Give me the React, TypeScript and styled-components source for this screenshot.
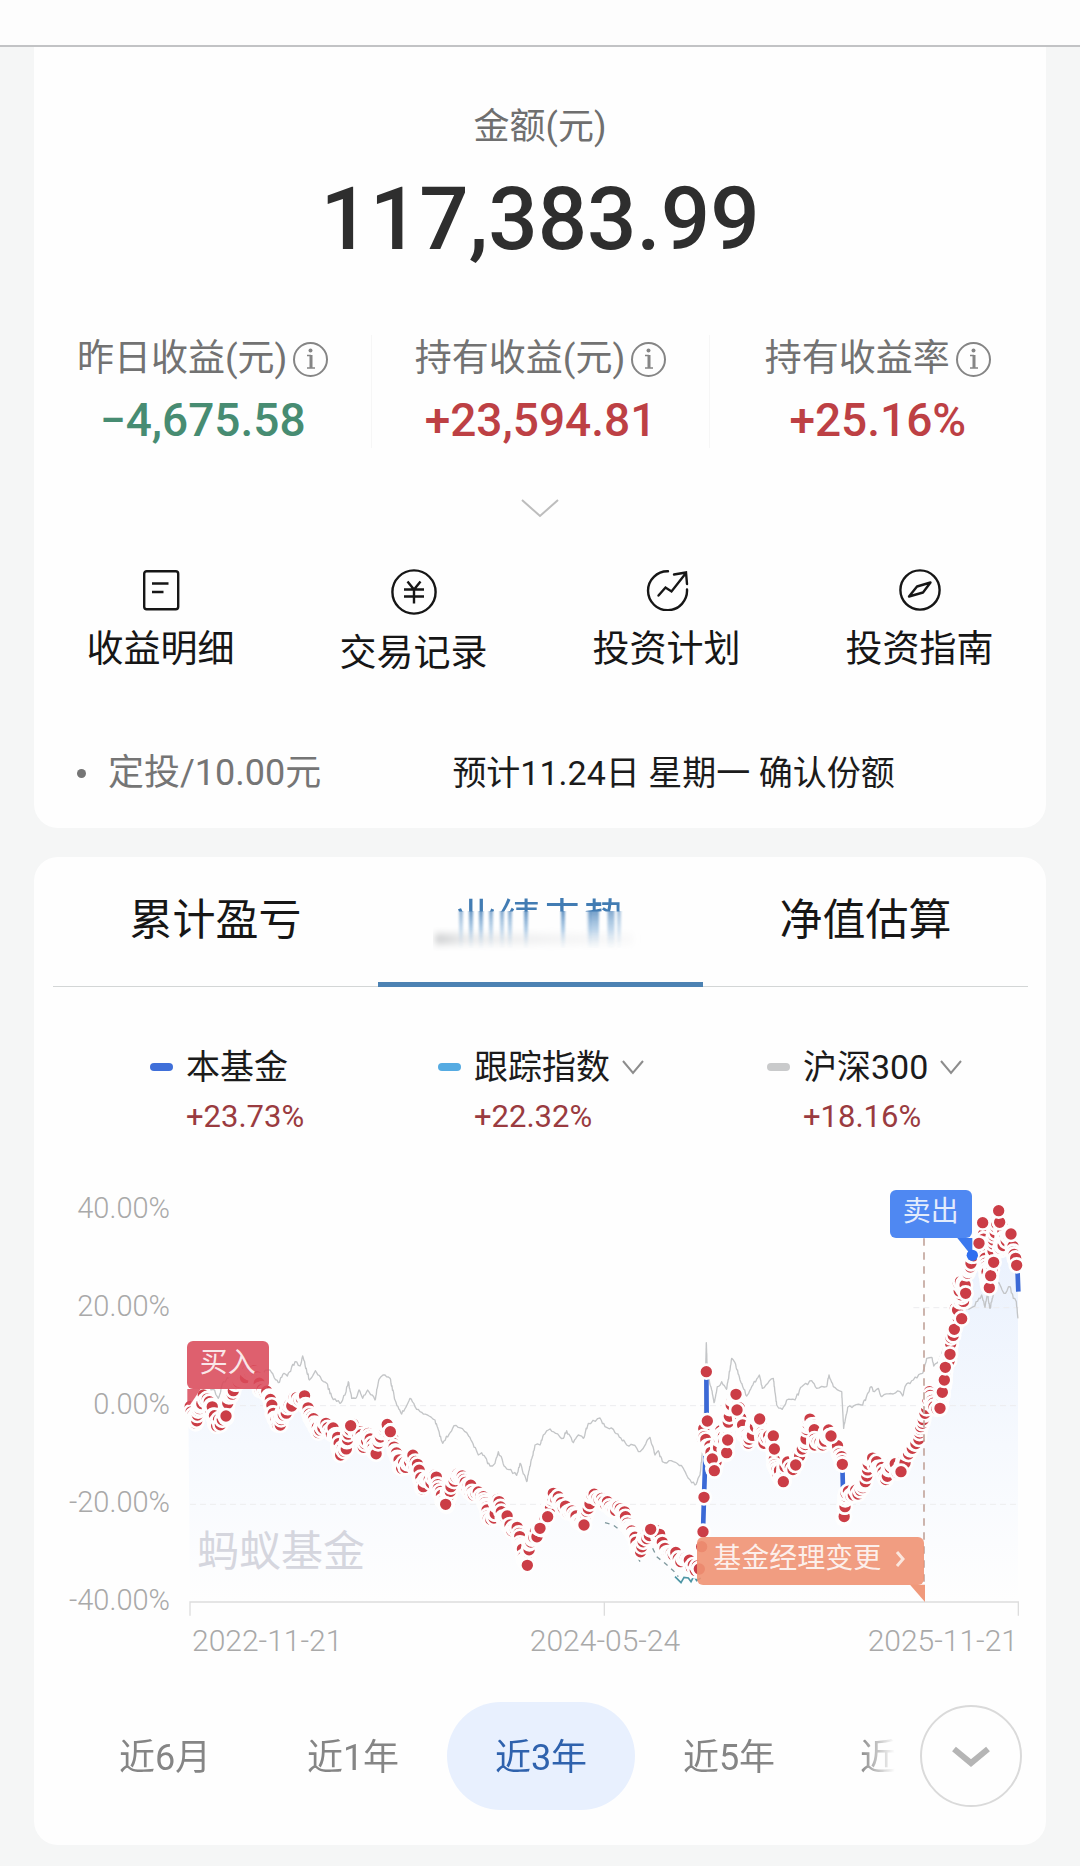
import React from "react";
import styled, { createGlobalStyle } from "styled-components";

const GlobalStyle = createGlobalStyle`
  *, *::before, *::after { box-sizing: border-box; }
  body {
    margin: 0;
    background: #f5f6f6;
    color: #1b1b1b;
    font-family: Roboto, "Noto Sans CJK SC", "Noto Sans", sans-serif;
  }
  button {
    margin: 0;
    padding: 0;
    border: 0;
    background: none;
    color: inherit;
    font: inherit;
    cursor: pointer;
  }
`;

const TopBar = styled.header`
  height: 47px;
  background: #fdfdfd;
  border-bottom: 2px solid #c2c3c5;
`;

const Page = styled.main`
  display: flex;
  flex-direction: column;
  gap: 29px;
  padding: 0 34px 21px 34px;
`;

const Card = styled.section<{ $first?: boolean }>`
  background: #fefefe;
  border-radius: ${(p) => (p.$first ? "0 0 24px 24px" : "24px")};
  padding: ${(p) => (p.$first ? "56px 0 31px" : "33px 0 35px")};
`;

const Title = styled.h1`
  margin: 0;
  font-size: 36px;
  font-weight: 400;
  line-height: 48px;
  text-align: center;
  color: #6f6f6f;
`;

const Total = styled.p`
  margin: 18px 0 0;
  font-size: 87px;
  font-weight: 500;
  line-height: 100px;
  text-align: center;
  color: #2e2e2e;
`;

const Stats = styled.dl`
  display: grid;
  grid-template-columns: repeat(3, 1fr);
  margin: 66px 0 0;
`;

const Stat = styled.div`
  text-align: center;
  & + & {
    border-left: 1px solid #f6f6f6;
  }
`;

const StatLabel = styled.dt`
  display: flex;
  align-items: center;
  justify-content: center;
  gap: 6px;
  font-size: 37px;
  line-height: 48px;
  color: #727272;
`;

const StatValue = styled.dd<{ $down?: boolean }>`
  margin: 9px 0 0;
  font-size: 46px;
  font-weight: 500;
  line-height: 56px;
  color: ${(p) => (p.$down ? "#478c72" : "#bd4044")};
`;

const IconButton = styled.button`
  display: flex;
`;

const Expand = styled.button`
  display: flex;
  margin: 50px auto 0;
`;

const Actions = styled.nav`
  display: grid;
  grid-template-columns: repeat(4, 1fr);
  align-items: start;
  margin-top: 51px;
`;

const Action = styled.a`
  display: flex;
  flex-direction: column;
  align-items: center;
  gap: 15px;
  font-size: 37px;
  line-height: 48px;
  color: #161616;
  text-decoration: none;
`;

const Plan = styled.div`
  display: grid;
  grid-template-columns: 375fr 593fr;
  margin-top: 71px;
  padding-left: 43px;
  line-height: 48px;
`;

const PlanName = styled.span`
  display: flex;
  align-items: center;
  gap: 22px;
  font-size: 36px;
  color: #757575;
  &::before {
    content: "";
    width: 9px;
    height: 9px;
    border-radius: 50%;
    background: #757575;
  }
`;

const PlanNote = styled.span`
  font-size: 34px;
  color: #1b1b1b;
`;

const Tabs = styled.div`
  display: grid;
  grid-template-columns: repeat(3, 1fr);
  margin: 0 18px 0 19px;
  border-bottom: 1px solid #d3d6d6;
`;

const Tab = styled.button<{ $active?: boolean }>`
  position: relative;
  height: 97px;
  margin-bottom: -1px;
  padding-bottom: 33px;
  border-bottom: 5px solid ${(p) => (p.$active ? "#4c82b3" : "transparent")};
  font-size: 43px;
  line-height: 60px;
  color: ${(p) => (p.$active ? "#427cb3" : "#161616")};
`;

const FadedLabel = styled.span`
  mask-image: linear-gradient(#000 21px, transparent 22px);
  display: block;
`;

const Smear = styled.svg`
  position: absolute;
  top: 21px;
  left: 50%;
  margin-left: -108px;
`;

const Legend = styled.div`
  display: grid;
  grid-template-columns: 288fr 329fr 200fr;
  margin-top: 56px;
  padding: 0 79px 0 116px;
`;

const Series = styled.div`
  display: grid;
  grid-template-columns: 23px auto;
  column-gap: 13px;
  row-gap: 6px;
  align-items: center;
  align-content: start;
  justify-content: start;
  white-space: nowrap;
`;

const Swatch = styled.span<{ $color: string }>`
  height: 8px;
  border-radius: 4px;
  background: ${(p) => p.$color};
`;

const SeriesName = styled.span`
  display: flex;
  align-items: center;
  gap: 11px;
  font-size: 34px;
  line-height: 48px;
  color: #1b1b1b;
`;

const SeriesButton = styled(SeriesName).attrs({ as: "button" })``;

const SeriesValue = styled.span`
  grid-column: 2;
  font-size: 31px;
  line-height: 40px;
  color: #9a3b40;
`;

const Chart = styled.div`
  display: grid;
  grid-template-columns: 136px 1fr;
  gap: 10px;
  margin-top: 43px;
  padding-right: 16px;
`;

const YAxis = styled.div`
  display: flex;
  flex-direction: column;
  justify-content: space-between;
  padding-top: 8px;
  font-size: 29px;
  font-weight: 300;
  line-height: 40px;
  text-align: right;
  color: #a9a9a9;
`;

const Plot = styled.div`
  position: relative;
`;

const PlotSvg = styled.svg`
  display: block;
  width: 100%;
`;

const Watermark = styled.span`
  position: absolute;
  left: 2%;
  top: 79%;
  font-size: 42px;
  line-height: 48px;
  color: #d5d6de;
`;

const Flag = styled.button<{ $left: string; $top: string; $width: number; $color: string }>`
  position: absolute;
  left: ${(p) => p.$left};
  top: ${(p) => p.$top};
  width: ${(p) => p.$width}px;
  height: 48px;
  padding-bottom: 4px;
  border-radius: 6px;
  background: ${(p) => p.$color};
  display: flex;
  align-items: center;
  justify-content: center;
  gap: 14px;
  font-size: 28px;
  line-height: 42px;
  white-space: nowrap;
  color: rgba(255, 255, 255, 0.85);
`;

const Dates = styled.div`
  display: flex;
  justify-content: space-between;
  padding: 0 28px 0 158px;
  font-size: 30px;
  font-weight: 300;
  line-height: 40px;
  color: #a9a9a9;
  margin-top: 1px;
`;

const RangeBar = styled.div`
  display: flex;
  align-items: center;
  justify-content: space-between;
  margin-top: 41px;
  padding: 0 24px 0 37px;
`;

const Ranges = styled.div`
  display: flex;
  flex: 1;
  min-width: 0;
  margin-right: 21px;
  mask-image: linear-gradient(to left, transparent 4px, #000 40px);
`;

const Range = styled.button<{ $active?: boolean; $last?: boolean }>`
  flex: ${(p) => (p.$last ? "1 1 0" : "0 0 188px")};
  padding-top: 4px;
  padding-left: ${(p) => (p.$last ? "37px" : "0")};
  text-align: ${(p) => (p.$last ? "left" : "center")};
  height: 108px;
  border-radius: 54px;
  font-size: 36px;
  line-height: 48px;
  white-space: nowrap;
  color: ${(p) => (p.$active ? "#2f62ad" : "#858585")};
  background: ${(p) => (p.$active ? "#e8f0fe" : "transparent")};
`;

const More = styled.button`
  display: flex;
  align-items: center;
  justify-content: center;
  flex: none;
  width: 102px;
  height: 102px;
  border: 2px solid #dadada;
  border-radius: 50%;
`;

const InfoIcon = () => (
  <svg width="35" height="35" viewBox="0 0 35 35" fill="none" stroke="#858585" strokeWidth="2">
    <circle cx="17.5" cy="17.5" r="16.5" />
    <path d="M14 13.5h4M14 26h8" strokeWidth="1.5" />
    <path d="M18 13v13" strokeWidth="3" />
    <circle cx="17.5" cy="8.5" r="2" fill="#858585" stroke="none" />
  </svg>
);

const Chevron = ({ w, h, color, stroke }: { w: number; h: number; color: string; stroke: number }) => (
  <svg width={w} height={h} fill="none" stroke={color} strokeWidth={stroke}>
    <path d={`M${stroke} ${stroke}L${w / 2} ${h - stroke}L${w - stroke} ${stroke}`} />
  </svg>
);

const DetailIcon = () => (
  <svg width="42" height="42" viewBox="0 0 42 42" fill="none" stroke="#161616" strokeWidth="2.4">
    <rect x="4.2" y="2.2" width="34" height="38" rx="2.5" />
    <path d="M12 14.5h16.500M12 23h11.500" />
  </svg>
);

const YenIcon = () => (
  <svg width="46" height="46" viewBox="0 0 46 46" fill="none" stroke="#161616" strokeWidth="2.4">
    <circle cx="23" cy="23" r="21.600" />
    <path d="M16.500 12.500L23 20.500L29.500 12.500M13 20.500h20M13 27.500h20M23 20.500v14" />
  </svg>
);

const PlanIcon = () => (
  <svg width="46" height="42" viewBox="0 0 46 42" fill="none" stroke="#161616" strokeWidth="2.4" strokeLinecap="round">
    <path d="M24 2.200A19.500 19.500 0 1 0 43 20.500" />
    <path d="M14.500 26.500L21.500 18.500L27.500 22.500L42 4M30 5.500L42 3.500L43 15" />
  </svg>
);

const GuideIcon = () => (
  <svg width="42" height="42" viewBox="0 0 42 42" fill="none" stroke="#161616" strokeWidth="2.4">
    <circle cx="21" cy="21" r="19.600" />
    <path d="M31.500 13.500L24 23.500L10 27.500L18 17.500Z" strokeLinejoin="round" />
  </svg>
);

type Pt = [number, number];

const FUND: Pt[] = [
  [25, 733], [47, 790], [52, 765], [70, 705], [88, 725], [110, 798], [138, 768], [140, 735], [160, 692],
  [190, 655], [222, 632], [240, 690], [267, 710], [280, 760], [301, 795], [310, 765], [328, 735], [372, 710],
  [377, 735], [395, 770], [415, 818], [438, 790], [470, 825], [482, 885], [497, 862], [512, 797], [540, 815],
  [550, 862], [565, 820], [585, 875], [595, 850], [617, 795], [631, 815], [640, 850], [647, 875], [665, 925],
  [695, 893], [710, 920], [730, 980], [765, 945], [775, 985], [797, 1033], [813, 980], [842, 945], [865, 975],
  [880, 1005], [910, 1010], [925, 1075], [940, 1070], [953, 1018], [964, 1055], [990, 1095], [1017, 1120],
  [1020, 1150], [1042, 1216], [1048, 1150], [1080, 1105], [1103, 1060], [1120, 1000], [1135, 1010],
  [1150, 1045], [1170, 1055], [1212, 1095], [1215, 1062], [1235, 1005], [1265, 1015], [1300, 1050],
  [1328, 1055], [1345, 1100], [1378, 1170], [1412, 1108], [1435, 1130], [1455, 1165], [1480, 1185],
  [1510, 1195], [1540, 1215], [1558, 1227],
];

const FUND_LATE: Pt[] = [
  [1582, 783], [1567, 835], [1588, 860], [1603, 932], [1622, 812], [1640, 878], [1643, 795], [1650, 740],
  [1668, 703], [1685, 795], [1705, 850], [1722, 800], [1739, 777], [1752, 850], [1780, 828], [1783, 915],
  [1810, 965], [1815, 920], [1847, 915], [1855, 880], [1875, 850], [1884, 780], [1902, 797], [1904, 855],
  [1928, 855], [1946, 810], [1960, 845], [1985, 890], [1987, 913],
];

const FUND_REBOUND: Pt[] = [
  [1990, 1075], [1995, 1040], [1998, 1000], [2020, 1005], [2048, 983], [2058, 942], [2072, 893], [2090, 905],
  [2113, 950], [2140, 915], [2163, 932], [2180, 880], [2197, 865], [2215, 830], [2222, 800], [2235, 760],
  [2248, 695], [2262, 740], [2280, 745], [2287, 697], [2293, 660], [2296, 622], [2310, 583], [2313, 533],
  [2323, 508], [2335, 476], [2326, 445], [2353, 425], [2335, 370], [2348, 385], [2365, 330], [2377, 286],
  [2397, 250], [2408, 188], [2412, 270], [2417, 320], [2428, 383], [2438, 300], [2440, 240], [2456, 152],
  [2470, 235], [2460, 265], [2493, 222], [2500, 275], [2507, 295],
];

const TOP_DOTS: Pt[] = [
  [138, 768], [512, 797], [631, 815], [797, 1033], [1042, 1216], [1080, 1105], [1103, 1070], [1212, 1095],
  [1412, 1108], [1558, 1227], [1565, 1160], [1569, 1115], [1572, 1012], [1579, 635], [1582, 783], [1597, 897],
  [1603, 932], [1640, 878], [1643, 840], [1668, 703], [1671, 750], [1739, 777], [1780, 828], [1783, 867],
  [1810, 965], [1847, 915], [1953, 828], [1987, 913], [2163, 935], [2280, 745], [2287, 697], [2293, 660],
  [2296, 622], [2310, 583], [2323, 508], [2345, 476], [2357, 400], [2397, 250], [2408, 188], [2428, 383],
  [2432, 347], [2441, 307], [2459, 187], [2456, 152], [2493, 222], [2510, 316],
];

const INDEX: Pt[] = [
  [25, 735], [60, 700], [100, 688], [115, 715], [130, 665], [170, 640], [200, 600], [235, 640], [270, 630],
  [295, 668], [312, 640], [322, 648], [345, 605], [360, 618], [368, 588], [388, 660], [406, 632], [425, 660],
  [440, 670], [455, 710], [480, 730], [495, 705], [505, 665], [515, 715], [527, 715], [537, 690], [548, 715],
  [563, 690], [585, 720], [597, 658], [615, 645], [630, 655], [645, 720], [665, 762], [690, 715], [705, 740],
  [730, 762], [765, 780], [788, 850], [822, 797], [860, 818], [895, 885], [905, 878], [930, 918], [945, 910],
  [955, 875], [975, 920], [1010, 946], [1020, 910], [1040, 965], [1065, 855], [1080, 855], [1090, 825],
  [1110, 807], [1150, 835], [1160, 812], [1180, 848], [1195, 825], [1210, 835], [1225, 790], [1260, 774],
  [1275, 800], [1300, 808], [1340, 855], [1360, 855], [1380, 875], [1410, 832], [1425, 885], [1435, 872],
  [1447, 905], [1480, 905], [1510, 925], [1525, 955], [1545, 975], [1560, 945], [1568, 870], [1574, 740],
  [1579, 548], [1582, 640], [1595, 690], [1602, 728], [1612, 680], [1625, 665], [1640, 688], [1655, 595],
  [1665, 608], [1680, 660], [1700, 708], [1715, 680], [1738, 645], [1747, 685], [1780, 655], [1790, 735],
  [1807, 748], [1820, 720], [1845, 720], [1865, 680], [1895, 662], [1910, 685], [1940, 680], [1947, 645],
  [1960, 680], [1985, 695], [1991, 805], [2003, 742], [2048, 735], [2073, 680], [2083, 695], [2095, 685],
  [2105, 710], [2160, 695], [2168, 708], [2175, 680], [2200, 660], [2227, 640], [2240, 595], [2255, 592],
  [2261, 618], [2275, 605], [2300, 540], [2330, 470], [2360, 445], [2380, 440], [2405, 405], [2415, 442],
  [2422, 400], [2430, 445], [2445, 382], [2457, 368], [2472, 400], [2490, 380], [2500, 415], [2509, 425],
  [2514, 475],
];

/* Deterministic jitter in the range -1..1, so the curve is stable between renders. */
const jitter = (n: number) => {
  const v = Math.sin(n * 127.1 + 31.7) * 43758.5453;
  return (v - Math.floor(v)) * 2 - 1;
};

const resample = (pts: Pt[], step: number, noise: number): Pt[] => {
  const out: Pt[] = [];
  for (let i = 0; i < pts.length - 1; i++) {
    const [x0, y0] = pts[i];
    const [x1, y1] = pts[i + 1];
    const n = Math.max(1, Math.round(Math.hypot(x1 - x0, y1 - y0) / step));
    for (let k = 0; k < n; k++) {
      const t = k / n;
      const wobble = k === 0 ? 0 : jitter(out.length + x0) * noise;
      out.push([x0 + (x1 - x0) * t, y0 + (y1 - y0) * t + wobble]);
    }
  }
  out.push(pts[pts.length - 1]);
  return out;
};

const toPath = (pts: Pt[]) => "M" + pts.map(([x, y]) => `${x.toFixed(1)} ${y.toFixed(1)}`).join("L");

const trades = [FUND, FUND_LATE, FUND_REBOUND].flatMap((part) => resample(part, 8, 15));
const indexPath = toPath(resample(INDEX, 7, 5));
const areaPath = toPath([...FUND, [1579, 635], ...FUND_LATE, ...FUND_REBOUND, [2514, 400]]) + "L2514 1326L30 1326Z";

const Dot = ({ p, color = "#cb3d46" }: { p: Pt; color?: string }) => (
  <circle cx={p[0]} cy={p[1]} r="21" fill={color} stroke="#fefefe" strokeWidth="8" />
);

const Performance = () => (
  <PlotSvg viewBox="0 60 2550 1320" role="img" aria-label="业绩走势">
    <defs>
      <linearGradient id="area" x1="0" y1="0" x2="0" y2="1">
        <stop offset="0" stopColor="#e8f0fd" />
        <stop offset="0.600" stopColor="#f6f9fe" />
        <stop offset="1" stopColor="#fefefe" />
      </linearGradient>
    </defs>
    <path d={areaPath} fill="url(#area)" />
    <path d="M30 737H2515M30 1033H2515M2200 443H2515" stroke="#ededef" strokeWidth="3" strokeDasharray="18 12" />
    <path d="M30 1367V1326H2515V1367M1273 1326V1367" fill="none" stroke="#dddddd" strokeWidth="4" />
    <path d={indexPath} fill="none" stroke="#c3c5c7" strokeWidth="4" strokeLinejoin="round" />
    <path
      d="M1275 1088L1300 1095L1325 1115M1418 1165L1430 1190L1455 1210L1480 1232L1495 1250M1375 1195L1380 1205"
      fill="none"
      stroke="#7f989d"
      strokeWidth="4"
      strokeDasharray="14 14"
    />
    <path
      d="M1485 1250L1503 1268L1512 1252L1525 1254L1533 1265L1542 1248L1550 1262L1562 1254"
      fill="none"
      stroke="#4d96a5"
      strokeWidth="5"
    />
    <path
      d="M1579 635L1580 783M1577 860L1572 1012L1569 1115L1565 1160M1987 913L1989 990M2512 316L2515 395"
      fill="none"
      stroke="#3b69d6"
      strokeWidth="14"
    />
    {trades.map((p, i) => (
      <Dot key={i} p={p} />
    ))}
    {TOP_DOTS.map((p, i) => (
      <Dot key={i} p={p} />
    ))}
    <path d="M2232 235V1326" stroke="#c3a69d" strokeWidth="5" strokeDasharray="22 20" />
    <path d="M22 687V735H30L62 687Z" fill="#d94a5a" fillOpacity="0.85" />
    <path d="M2332 234L2377 290V234Z" fill="#3b78ee" />
    <path d="M2190 1274L2235 1326V1274Z" fill="#f0997b" />
    <circle cx="2377" cy="286" r="17" fill="#2f6ff0" />
  </PlotSvg>
);

const SMEAR_LINES: [number, number, number][] = [
  [28, 4, 0.6], [38, 4, 0.9], [48, 4, 0.9], [58, 4, 0.7], [69, 4, 0.7], [77, 4, 0.7], [93, 4, 0.9],
  [130, 4, 0.9], [156, 4, 0.4], [161, 10, 0.8], [178, 7, 0.7], [186, 4, 0.5],
];

const SmearedText = () => (
  <Smear width="216" height="40" viewBox="0 0 216 40" aria-hidden="true">
    <defs>
      <linearGradient id="streak" x1="0" y1="0" x2="0" y2="1">
        <stop offset="0" stopColor="#3f7ab4" stopOpacity="0.900" />
        <stop offset="0.500" stopColor="#86b2da" stopOpacity="0.700" />
        <stop offset="1" stopColor="#d5e4f0" stopOpacity="0.100" />
      </linearGradient>
      <linearGradient id="mist" x1="0" y1="0" x2="1" y2="0">
        <stop offset="0" stopColor="#bcbec0" />
        <stop offset="0.150" stopColor="#e2e3e4" />
        <stop offset="1" stopColor="#f1f1f2" stopOpacity="0.500" />
      </linearGradient>
      <filter id="soft" x="-0.1" y="-1" width="1.2" height="3">
        <feGaussianBlur stdDeviation="3 4" />
      </filter>
      <filter id="edge" x="-0.1" y="0" width="1.2" height="1">
        <feGaussianBlur stdDeviation="0.8 0" />
      </filter>
    </defs>
    <rect x="2" y="24" width="198" height="8" fill="url(#mist)" filter="url(#soft)" />
    <g filter="url(#edge)">
      {SMEAR_LINES.map(([x, w, o]) => (
        <rect key={x} x={x - w / 2} y="0" width={w} height="37" fill="url(#streak)" opacity={o} />
      ))}
    </g>
  </Smear>
);

const STATS = [
  { label: "昨日收益(元)", value: "−4,675.58", down: true },
  { label: "持有收益(元)", value: "+23,594.81" },
  { label: "持有收益率", value: "+25.16%" },
];

const ACTIONS = [
  { label: "收益明细", Icon: DetailIcon },
  { label: "交易记录", Icon: YenIcon },
  { label: "投资计划", Icon: PlanIcon },
  { label: "投资指南", Icon: GuideIcon },
];

const SERIES = [
  { name: "本基金", value: "+23.73%", color: "#3f6fd9", menu: false },
  { name: "跟踪指数", value: "+22.32%", color: "#55abe2", menu: true },
  { name: "沪深300", value: "+18.16%", color: "#c9cacb", menu: true },
];

const RANGES = ["近6月", "近1年", "近3年", "近5年", "近"];

export default function App() {
  return (
    <>
      <GlobalStyle />
      <TopBar />
      <Page>
        <Card $first>
          <Title>金额(元)</Title>
          <Total>117,383.99</Total>
          <Stats>
            {STATS.map((s) => (
              <Stat key={s.label}>
                <StatLabel>
                  {s.label}
                  <IconButton aria-label="说明">
                    <InfoIcon />
                  </IconButton>
                </StatLabel>
                <StatValue $down={s.down}>{s.value}</StatValue>
              </Stat>
            ))}
          </Stats>
          <Expand aria-label="展开">
            <Chevron w={40} h={20} color="#bdbdbd" stroke={2} />
          </Expand>
          <Actions>
            {ACTIONS.map(({ label, Icon }) => (
              <Action key={label} href="#">
                <Icon />
                {label}
              </Action>
            ))}
          </Actions>
          <Plan>
            <PlanName>定投/10.00元</PlanName>
            <PlanNote>预计11.24日 星期一 确认份额</PlanNote>
          </Plan>
        </Card>

        <Card>
          <Tabs role="tablist">
            <Tab role="tab" aria-selected={false}>累计盈亏</Tab>
            <Tab role="tab" aria-selected $active>
              <FadedLabel>业绩走势</FadedLabel>
              <SmearedText />
            </Tab>
            <Tab role="tab" aria-selected={false}>净值估算</Tab>
          </Tabs>

          <Legend>
            {SERIES.map((s) => (
              <Series key={s.name}>
                <Swatch $color={s.color} />
                {s.menu ? (
                  <SeriesButton>
                    {s.name}
                    <Chevron w={24} h={16} color="#8d8d8d" stroke={2} />
                  </SeriesButton>
                ) : (
                  <SeriesName>{s.name}</SeriesName>
                )}
                <SeriesValue>{s.value}</SeriesValue>
              </Series>
            ))}
          </Legend>

          <Chart>
            <YAxis>
              {["40.00%", "20.00%", "0.00%", "-20.00%", "-40.00%"].map((t) => (
                <span key={t}>{t}</span>
              ))}
            </YAxis>
            <Plot>
              <Performance />
              <Watermark>蚂蚁基金</Watermark>
              <Flag $left="0.8%" $top="36.6%" $width={82} $color="rgba(217, 74, 90, 0.88)">买入</Flag>
              <Flag $left="83.5%" $top="2.3%" $width={82} $color="#4f88f2">卖出</Flag>
              <Flag $left="60.8%" $top="81.1%" $width={227} $color="rgba(240, 146, 115, 0.9)">
                基金经理变更
                <svg width="12" height="18" fill="none" stroke="#fbe6dd" strokeWidth="3">
                  <path d="M2 2L8 9L2 16" />
                </svg>
              </Flag>
            </Plot>
          </Chart>
          <Dates>
            <span>2022-11-21</span>
            <span>2024-05-24</span>
            <span>2025-11-21</span>
          </Dates>

          <RangeBar>
            <Ranges>
              {RANGES.map((r) => (
                <Range key={r} $active={r === "近3年"} $last={r === "近"}>
                  {r}
                </Range>
              ))}
            </Ranges>
            <More aria-label="更多">
              <Chevron w={46} h={26} color="#b5b5b5" stroke={6} />
            </More>
          </RangeBar>
        </Card>
      </Page>
    </>
  );
}
